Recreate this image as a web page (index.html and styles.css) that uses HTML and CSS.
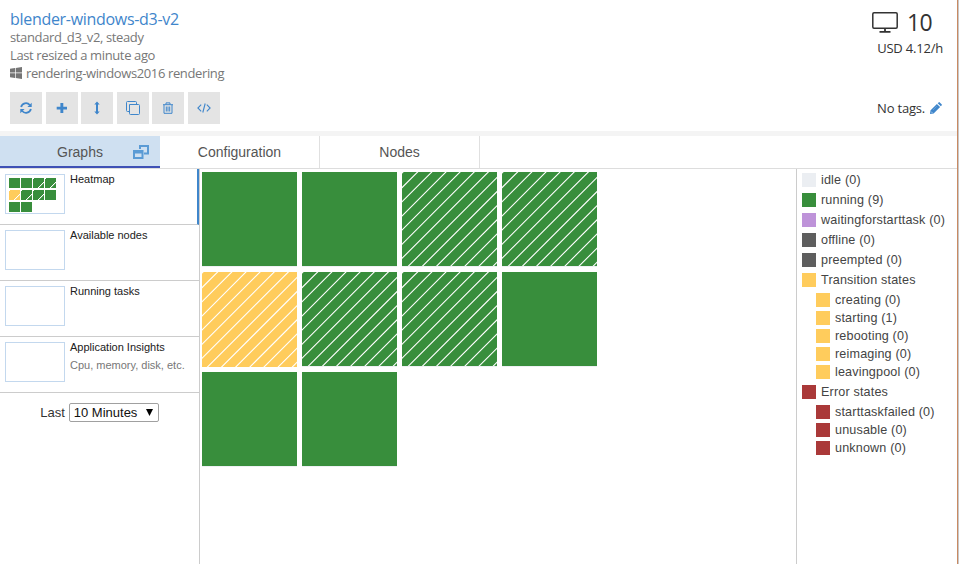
FILE: index.html
```html
<!DOCTYPE html>
<html lang="en">
<head>
<meta charset="utf-8">
<title>Pool</title>
<link rel="stylesheet" href="styles.css">
</head>
<body>
<svg class="defs" width="0" height="0">
  <defs>
    <path id="stripes" fill="none" stroke="#fff" stroke-width="1.1" d="M-1 2 2-1M-1 16.640 16.640-1M-1 30.780 30.780-1M-1 44.920 44.920-1M-1 59.060 59.060-1M-1 73.200 73.200-1M-1 87.340 87.340-1M-1 101.480 101.480-1M-1 115.620 115.620-1M-1 129.760 129.760-1M-1 143.900 143.900-1M-1 158.040 158.040-1M-1 172.180 172.180-1M-1 186.320 186.320-1"/>
  </defs>
</svg>
<div class="app">
  <header class="header">
    <div class="info">
      <h1 class="t">blender-windows-d3-v2</h1>
      <p class="t">standard_d3_v2, steady</p>
      <p class="t">Last resized a minute ago</p>
      <p class="os"><svg width="12" height="12" viewBox="0 0 12 12" fill="#757575"><path d="M0 1.7 5 1v4.6H0zM5.7.9 12 0v5.6H5.7zM0 6.3h5v4.6l-5-.7zM5.7 6.3H12V12l-6.3-.9z"/></svg><span class="t image">rendering-windows2016 rendering</span></p>
      <div class="buttons">
        <button><svg width="12" height="12" viewBox="0 0 12 12" fill="none" stroke="#3f86cb" stroke-width="1.8"><path d="M1.1 5A5 5 0 0 1 9.8 3M10.9 7A5 5 0 0 1 2.2 9"/><path d="M11.7.7V5H7.4zM.3 11.3V7h4.3z" fill="#3f86cb" stroke="none"/></svg></button>
        <button><svg width="12" height="12" viewBox="0 0 12 12" fill="#3f86cb"><path d="M4.4 1h2.9v3.7H11v2.8H7.3V11H4.4V7.5H.7V4.7h3.7z"/></svg></button>
        <button><svg width="12" height="14" viewBox="0 0 12 14" fill="#3f86cb"><path d="M6 .4 8.7 3.5H7v7h1.7L6 13.6l-2.7-3.1H5v-7H3.3z"/></svg></button>
        <button><svg width="14" height="14" viewBox="0 0 14 14" fill="none" stroke="#3f86cb"><path d="M4 3.5h8.5q1 0 1 1V12.500q0 1-1 1H4.500q-1 0-1-1V3.500zM3.500 10.500h-2q-1 0-1-1v-8q0-1 1-1h8q1 0 1 1v2"/></svg></button>
        <button><svg width="12" height="12" viewBox="0 0 12 12" fill="none" stroke="#3f86cb"><path d="M1 2.7h10M4 2.5V.9h4v1.6M2 3v8.3h8V3M4.3 4.5v5M6 4.5v5M7.7 4.5v5"/></svg></button>
        <button><svg width="14" height="12" viewBox="0 0 14 12" fill="none" stroke="#3f86cb" stroke-width="1.1"><path d="M4.2 2.7.9 6l3.3 3.3M9.8 2.7 13.1 6 9.8 9.3M8.2 1.5 5.8 10.5"/></svg></button>
      </div>
    </div>
    <div class="summary">
      <div class="count"><svg width="26" height="21" viewBox="0 0 26 21" fill="none" stroke="#333"><rect x=".8" y=".8" width="24.4" height="15.4" rx="1.2" stroke-width="1.5"/><path d="M13 16v3.500M7.500 19.800h11" stroke-width="1.8"/></svg><span>10</span></div>
      <div class="cost t">USD 4.12/h</div>
      <div class="tags"><span class="t">No tags.</span><svg width="12" height="12" viewBox="0 0 12 12" fill="#3f86cb"><path d="M6.900 1.900 10.100 5.100 3.600 11.600 0 12l.4-3.600zM7.700 1.200 8.600.4q.6-.6 1.200 0l1.800 1.800q.6.600 0 1.200l-.8.900z"/><path d="M1.100 9.600l1.300 1.300" stroke="#cfe0f1" stroke-width=".8"/><path d="M3 8 6.800 4.200" stroke="#8bb7e0" stroke-width=".5"/></svg></div>
    </div>
  </header>
  <nav class="tabs">
    <div class="tab active">Graphs<svg class="pop" width="16" height="14" viewBox="0 0 16 14" fill="none" stroke="#5b9bd5" stroke-width="2"><path d="M7 4V1h8v7.500h-4"/><path d="M1 6h8.500v7H1z"/><path d="M1 7h8.500" stroke-width="3"/></svg></div>
    <div class="tab">Configuration</div>
    <div class="tab">Nodes</div>
  </nav>
  <main class="main">
    <aside class="side">
      <div class="graph selected"><div class="thumb">
        <div class="mini"><i></i><i></i><i class="s"></i><i class="s"></i><i class="s y"></i><i class="s"></i><i class="s"></i><i></i><i></i><i></i></div>
      </div><div class="label">Heatmap</div></div>
      <div class="graph"><div class="thumb"></div><div class="label">Available nodes</div></div>
      <div class="graph"><div class="thumb"></div><div class="label">Running tasks</div></div>
      <div class="graph"><div class="thumb"></div><div class="label">Application Insights<small>Cpu, memory, disk, etc.</small></div></div>
      <div class="range"><span>Last</span><div class="select"><span>10 Minutes</span><svg width="7" height="7" viewBox="0 0 7 7"><path d="M0 0h7L3.500 7z"/></svg></div></div>
    </aside>
    <section class="heatmap">
      <div class="node"></div>
      <div class="node"></div>
      <div class="node"><svg width="95" height="94"><use href="#stripes"/></svg></div>
      <div class="node"><svg width="95" height="94"><use href="#stripes"/></svg></div>
      <div class="node yellow"><svg width="95" height="95"><use href="#stripes"/></svg></div>
      <div class="node"><svg width="95" height="94"><use href="#stripes"/></svg></div>
      <div class="node"><svg width="95" height="94"><use href="#stripes"/></svg></div>
      <div class="node"></div>
      <div class="node"></div>
      <div class="node"></div>
    </section>
    <aside class="legend">
      <div class="state"><i class="idle"></i>idle (0)</div>
      <div class="state"><i class="running"></i>running (9)</div>
      <div class="state"><i class="waiting"></i>waitingforstarttask (0)</div>
      <div class="state"><i class="offline"></i>offline (0)</div>
      <div class="state"><i class="offline"></i>preempted (0)</div>
      <div class="state"><i class="transition"></i>Transition states</div>
      <div class="group">
        <div><i class="transition"></i>creating (0)</div>
        <div><i class="transition"></i>starting (1)</div>
        <div><i class="transition"></i>rebooting (0)</div>
        <div><i class="transition"></i>reimaging (0)</div>
        <div><i class="transition"></i>leavingpool (0)</div>
      </div>
      <div class="state"><i class="error"></i>Error states</div>
      <div class="group">
        <div><i class="error"></i>starttaskfailed (0)</div>
        <div><i class="error"></i>unusable (0)</div>
        <div><i class="error"></i>unknown (0)</div>
      </div>
    </aside>
  </main>
</div>
</body>
</html>
```
FILE: styles.css
```css
* { box-sizing: border-box; }
body { margin: 0; background: #c8c8c8; color: #333; font-family: "Liberation Sans", Arial, sans-serif; overflow: hidden; }
.defs { position: absolute; }
.app { width: 958px; height: 564px; display: flex; flex-direction: column; background: #fff; border-right: 1px solid #c98a63; }
.header { height: 136px; flex: none; display: flex; justify-content: space-between; padding: 9px 14px 0 10px; border-bottom: 5px solid #f4f4f4; font-family: "Open Sans", "Noto Sans", sans-serif; }
.t { white-space: nowrap; }
.info h1 { margin: 0; height: 20px; line-height: 20px; font-size: 16px; font-weight: 400; color: #3f86cb; letter-spacing: -0.3px; }
.info p { margin: 0; height: 18px; line-height: 18px; font-size: 13px; color: #777; letter-spacing: -0.37px; }
.info p:nth-of-type(1) { height: 17px; line-height: 17px; }
.info .os { display: flex; align-items: center; gap: 4px; }
.buttons { display: flex; gap: 3.6px; margin-top: 10px; }
.buttons button { width: 32px; height: 32px; padding: 0; border: 0; background: #e4e4e4; display: flex; align-items: center; justify-content: center; }
.summary { display: flex; flex-direction: column; align-items: flex-end; padding-top: 1px; font-size: 13px; }
.count { display: flex; gap: 9px; height: 26px; line-height: 26px; font-size: 23px; letter-spacing: -0.6px; padding-right: 11px; }
.count svg { margin-top: 2px; }
.count span { margin-top: -1px; }
.cost { height: 20px; line-height: 20px; margin-top: 2px; letter-spacing: -0.2px; }
.tags { display: flex; align-items: center; gap: 5px; height: 20px; margin-top: 40px; padding-right: 1px; letter-spacing: -0.2px; }
.tabs { height: 33px; flex: none; display: flex; border-bottom: 1px solid #ddd; }
.tab { width: 160px; height: 32px; line-height: 32px; text-align: center; font-size: 14px; color: #555; border-right: 1px solid #e0e0e0; position: relative; }
.tab.active { background: #cfe0f1; border-right: 0; border-bottom: 2px solid #3f51b5; }
.pop { position: absolute; left: 133px; top: 9px; }
.main { flex: 1; display: flex; min-height: 0; }
.side { width: 200px; border-right: 1px solid #ccc; }
.graph { height: 56px; display: flex; gap: 5px; padding: 5px 0 0 5px; border-bottom: 1px solid #ccc; }
.graph.selected { border-right: 2px solid #3f86cb; }
.thumb { width: 60px; height: 40px; border: 1px solid #c3d8ee; padding: 3px; }
.label { font-size: 11px; line-height: 12px; color: #212121; margin-top: -1px; }
.label small { display: block; font-size: 11px; color: #777; margin-top: 6px; }
.mini { display: grid; grid-template-columns: repeat(4, 11px); grid-auto-rows: 10px; gap: 2px 1px; }
.mini i { background: #388e3c; }
.mini .y { background: #ffcc5c; }
.mini .s { background-image: linear-gradient(135deg, #fff 0 .8px, transparent 1.2px 10px, #fff 10.3px 11px, transparent 11.4px); }
.range { display: flex; justify-content: center; gap: 4px; margin-top: 10px; font-size: 13px; line-height: 19px; }
.select { width: 90px; height: 19px; line-height: 18px; border: 1px solid #a0a0a0; border-radius: 2px; padding: 0 5px 0 4px; color: #111; display: flex; justify-content: space-between; align-items: center; white-space: nowrap; }
.heatmap { flex: 1; display: grid; grid-template-columns: repeat(4, 95px); grid-auto-rows: 95px; gap: 5px; padding: 3px 0 0 2px; align-content: start; }
.node { height: 94px; background: #388e3c; box-shadow: 0 1px #eef1f4; }
.node.yellow { height: 95px; background: #ffcc5c; box-shadow: none; }
.node svg { display: block; }
.legend { width: 161px; border-left: 1px solid #ccc; padding: 1px 0 0 5px; font-size: 12.6px; letter-spacing: .16px; color: #444; white-space: nowrap; }
.legend i { width: 14px; height: 14px; margin-right: 5px; }
.state { display: flex; align-items: center; height: 20px; }
.group { padding: 1px 0 1px 14px; }
.group div { display: flex; align-items: center; height: 18px; }
.idle { background: #ebeef2; }
.running { background: #388e3c; }
.waiting { background: #be93d9; }
.offline { background: #5e5e5e; }
.transition { background: #ffcc5c; }
.error { background: #aa3939; }
```
